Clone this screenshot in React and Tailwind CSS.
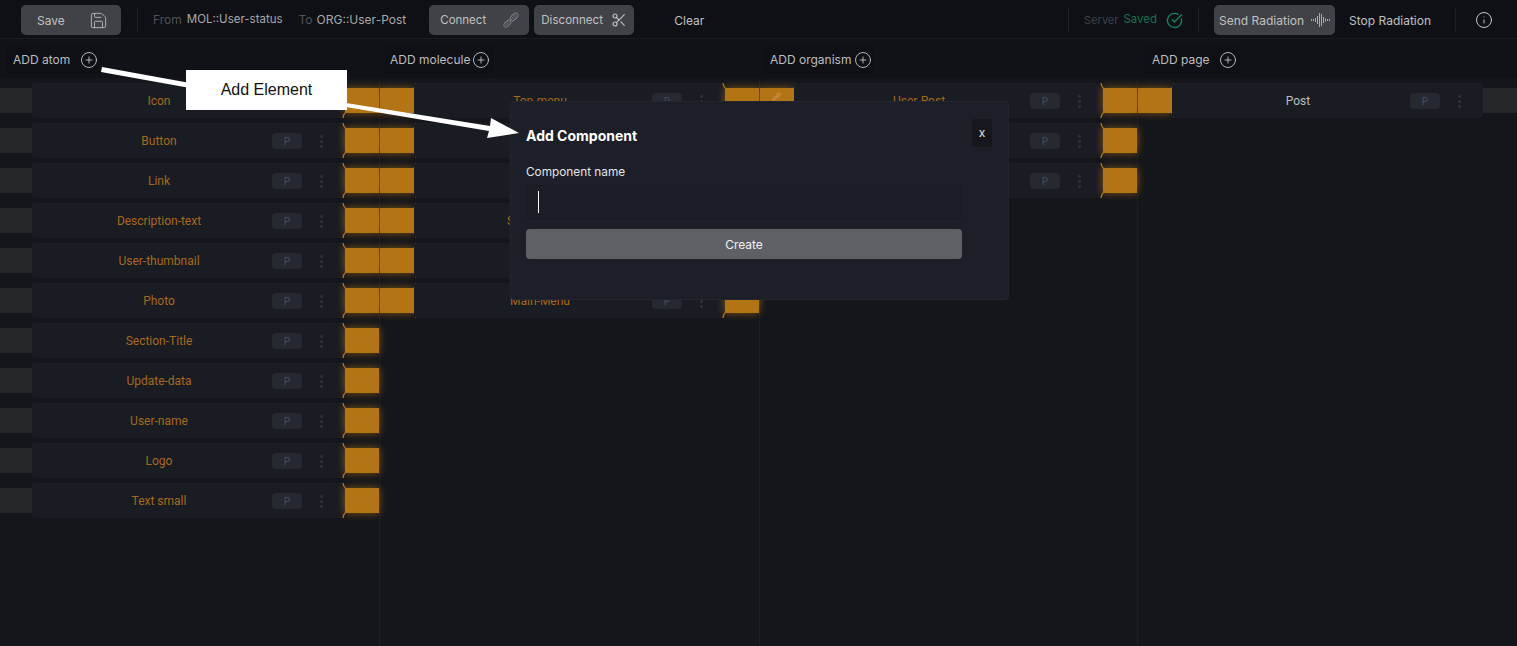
import { Save, Scissors, CircleCheckBig, Info, CirclePlus } from 'lucide-react'

const atoms = ['Icon', 'Button', 'Link', 'Description-text', 'User-thumbnail', 'Photo', 'Section-Title', 'Update-data', 'User-name', 'Logo', 'Text small']
const molecules = ['Top-menu', 'User-status', 'Post-info', 'Search-form', 'Post-text', 'Main-Menu']
const organisms = ['User-Post', 'Header', 'Sidebar']

function Helix({ className }) {
  return (
    <svg className={className} viewBox="0 0 24 24" fill="none" stroke="currentColor" strokeWidth="1.1">
      <ellipse cx="6.5" cy="17.5" rx="6.5" ry="3.8" transform="rotate(-45 6.5 17.5)" />
      <ellipse cx="16.5" cy="7.5" rx="7.5" ry="4.2" transform="rotate(-45 16.5 7.5)" />
      <path d="M10.9 8.9 15.1 13.1M12.2 6.2 17.8 11.8M14 4 20 10M16.7 2.7 21.3 7.3M2.4 17.4 6.6 21.6M3.8 14.8 9.2 20.2M6.4 13.4 10.6 17.6" />
    </svg>
  )
}

function Corners({ side }) {
  const left = side === 'left'
  return (
    <>
      <svg className={`absolute top-[-5px] h-[6px] w-[4px] ${left ? 'left-[-3px]' : 'right-[-3px] -scale-x-100'}`} viewBox="0 0 4 6">
        <path d="M1 0 Q1.5 4 4 6" fill="none" stroke="#b37415" strokeWidth="1.3" />
      </svg>
      <svg className={`absolute bottom-[-5px] h-[6px] w-[4px] ${left ? 'left-[-3px]' : 'right-[-3px] -scale-x-100'}`} viewBox="0 0 4 6">
        <path d="M1 6 Q1.5 2 4 0" fill="none" stroke="#b37415" strokeWidth="1.3" />
      </svg>
    </>
  )
}

function Handle({ side, marked }) {
  return (
    <div className="relative h-[25px] w-[34px] shrink-0 bg-[#b37415] shadow-[0_0_8px_rgba(179,116,21,0.7)]">
      <Corners side={side} />
      {marked && <Helix className="absolute left-[12px] top-[4px] h-[9px] w-[9px] text-[#d2a869]" />}
    </div>
  )
}

function Card({ label, color = 'text-[#a8691a]' }) {
  return (
    <div className="relative flex h-[35px] min-w-0 flex-1 items-center rounded-[3px] bg-[#191c23]">
      <span className={`flex-1 pl-[2px] pr-[61px] text-center font-['Roboto',sans-serif] text-[12px] ${color}`}>{label}</span>
      <div className="absolute right-[43px] top-[10px] flex h-[16px] w-[30px] items-center justify-center rounded-[4px] bg-[#262932] text-[10px] text-[#4c4f58]">
        P
      </div>
      <div className="absolute right-[22px] top-[12px] flex flex-col gap-[2px]">
        <i className="block h-[3px] w-[3px] rounded-full bg-[#30333b]" />
        <i className="block h-[3px] w-[3px] rounded-full bg-[#30333b]" />
        <i className="block h-[3px] w-[3px] rounded-full bg-[#30333b]" />
      </div>
    </div>
  )
}

function Grey({ width }) {
  return <div className={`h-[25px] shrink-0 bg-[#25262a] ${width}`} />
}

function AddChip({ label, className }) {
  return (
    <div className={`flex h-[29px] items-center rounded-[3px] bg-[#0e1016] text-[12px] text-[#bdbdbd] ${className}`}>
      <span>{label}</span>
      <CirclePlus size={18} strokeWidth={1.2} className="ml-auto text-[#c4c4c4]" />
    </div>
  )
}

function ToolButton({ label, className, children }) {
  return (
    <div className={`flex h-[30px] items-center rounded-[5px] bg-[#404247] text-[#c0c0c0] ${className}`}>
      <span className="pt-px">{label}</span>
      {children}
    </div>
  )
}

function Divider({ className }) {
  return <div className={`h-[26px] w-px bg-[#1c1f27] ${className}`} />
}

function Waveform() {
  const bars = [[1.5, 2], [3.5, 2], [5.5, 4], [7.5, 8], [9.5, 14], [11.5, 12], [13.5, 6], [15.5, 3], [17.5, 2], [19.5, 2]]
  return (
    <svg className="ml-auto h-[16px] w-[21px] text-[#b5b5b5]" viewBox="0 0 21 16">
      {bars.map(([x, h]) => (
        <line key={x} x1={x} x2={x} y1={8 - h / 2} y2={8 + h / 2} stroke="currentColor" strokeWidth="0.9" />
      ))}
    </svg>
  )
}

function Toolbar() {
  return (
    <div className="flex h-[39px] items-center border-b border-[#191c23] bg-[#0e1015] pt-[2px] text-[12px]">
      <ToolButton label="Save" className="ml-[21px] w-[100px] pl-[16px] pr-[13px]">
        <Save size={19} strokeWidth={1.2} className="ml-auto text-[#b5b5b5]" />
      </ToolButton>
      <Divider className="ml-[16px]" />
      <span className="ml-[15px] text-[#4e5057]">From</span>
      <span className="ml-[5px] text-[11.5px] text-[#a9a9a9]">MOL::User-status</span>
      <span className="ml-[16px] text-[#4e5057]">To</span>
      <span className="ml-[4px] text-[#a9a9a9]">ORG::User-Post</span>
      <ToolButton label="Connect" className="ml-[23px] w-[100px] pl-[11px] pr-[10px] text-[11.5px]">
        <Helix className="ml-auto h-[16px] w-[16px] text-[#8a8c90]" />
      </ToolButton>
      <ToolButton label="Disconnect" className="ml-[5px] w-[100px] pl-[7px] pr-[7px] text-[11.6px]">
        <Scissors size={16} strokeWidth={1.7} className="ml-auto text-[#c4c4c4]" />
      </ToolButton>
      <span className="ml-[40px] pt-px text-[#c0c0c0]">Clear</span>
      <Divider className="ml-auto" />
      <span className="ml-[15px] text-[11px] text-[#3f4148]">Server</span>
      <span className="ml-[5px] text-[11.5px] text-[#17704f]">Saved</span>
      <CircleCheckBig size={17} strokeWidth={2} className="ml-[9px] text-[#17805a]" />
      <Divider className="ml-[15px]" />
      <ToolButton label="Send Radiation" className="ml-[15px] w-[121px] pl-[5px] pr-[4px]">
        <Waveform />
      </ToolButton>
      <span className="ml-[14px] pt-px text-[#c0c0c0]">Stop Radiation</span>
      <Divider className="ml-[24px]" />
      <Info size={18} strokeWidth={1.3} className="ml-[19px] mr-[24px] text-[#c8c8c8]" />
    </div>
  )
}

function Dialog() {
  return (
    <div className="absolute left-[510px] top-[101px] h-[199px] w-[499px] rounded-[4px] border border-[#23262f] bg-[#1c1f28]">
      <h2 className="absolute left-[15px] top-[25px] text-[14px] font-bold leading-[17px] text-white">Add Component</h2>
      <div className="absolute left-[461px] top-[17px] flex h-[28px] w-[20px] items-center justify-center rounded-[3px] bg-[#15171d] text-[12px] text-[#e0e0e0]">
        x
      </div>
      <div className="ml-[15px] mt-[63px] w-[436px]">
        <div className="text-[11.8px] leading-[15px] text-[#e4e4e4]">Component name</div>
        <div className="mt-[5px] flex h-[34px] items-center rounded-[3px] border border-[#191b22] bg-[#1b1e27] pl-[11px]">
          <div className="h-[22px] w-px bg-white" />
        </div>
        <div className="mt-[10px] flex h-[30px] items-center justify-center rounded-[4px] bg-[#5e6066] pt-[2px] text-[12px] text-[#f0f0f0]">
          Create
        </div>
      </div>
    </div>
  )
}

function Annotation() {
  return (
    <>
      <svg className="absolute left-0 top-0 h-[646px] w-[1517px]" viewBox="0 0 1517 646">
        <polygon points="102,67 101,72 190,88 190,83" fill="#fff" />
        <polygon points="346,103 346,107 489,131 487,138 519,133 491,118 490,126" fill="#fff" />
      </svg>
      <div className="absolute left-[186px] top-[70px] flex h-[40px] w-[161px] items-center justify-center bg-white font-['Liberation_Sans',sans-serif] text-[16px] text-[#111]">
        Add Element
      </div>
    </>
  )
}

export default function App() {
  return (
    <div className="relative h-[646px] w-[1517px] overflow-hidden bg-[#14161b] font-['Inter',sans-serif]">
      <Toolbar />
      <div className="grid h-[607px] grid-cols-[380px_380px_378px_379px]">
        <section>
          <div className="h-[39px] bg-[#101218] pl-[6px] pt-[6px]">
            <AddChip label="ADD atom" className="w-[99px] pl-[7px] pr-[7px]" />
          </div>
          <div className="flex h-[568px] flex-col gap-[5px] border-r border-[#1c1f27] pt-[5px]">
            {atoms.map((name) => (
              <div key={name} className="flex h-[35px] items-center">
                <Grey width="w-[32px]" />
                <Card label={name} />
                <Handle side="left" />
              </div>
            ))}
          </div>
        </section>
        <section>
          <div className="h-[39px] bg-[#101218] pl-[5px] pt-[6px]">
            <AddChip label="ADD molecule" className="w-[109px] pl-[5px] pr-[4px]" />
          </div>
          <div className="flex h-[568px] flex-col gap-[5px] border-r border-[#1c1f27] pt-[5px]">
            {molecules.map((name) => (
              <div key={name} className="flex h-[35px] items-center">
                <Handle side="right" />
                <Card label={name} />
                <Handle side="left" />
              </div>
            ))}
          </div>
        </section>
        <section>
          <div className="h-[39px] bg-[#101218] pl-[4px] pt-[6px]">
            <AddChip label="ADD organism" className="w-[110px] pl-[6px] pr-[2px]" />
          </div>
          <div className="flex h-[568px] flex-col gap-[5px] border-r border-[#1c1f27] pt-[5px]">
            {organisms.map((name, i) => (
              <div key={name} className="flex h-[35px] items-center">
                <Handle side="right" marked={i === 0} />
                <Card label={name} />
                <Handle side="left" />
              </div>
            ))}
          </div>
        </section>
        <section>
          <div className="h-[39px] bg-[#101218] pl-[5px] pt-[6px]">
            <AddChip label="ADD page" className="w-[98px] pl-[9px] pr-[4px]" />
          </div>
          <div className="flex flex-col gap-[5px] pt-[5px]">
            <div className="flex h-[35px] items-center">
              <Handle side="right" />
              <Card label="Post" color="text-[#bdbdbd]" />
              <Grey width="w-[34px]" />
            </div>
          </div>
        </section>
      </div>
      <Dialog />
      <Annotation />
    </div>
  )
}
